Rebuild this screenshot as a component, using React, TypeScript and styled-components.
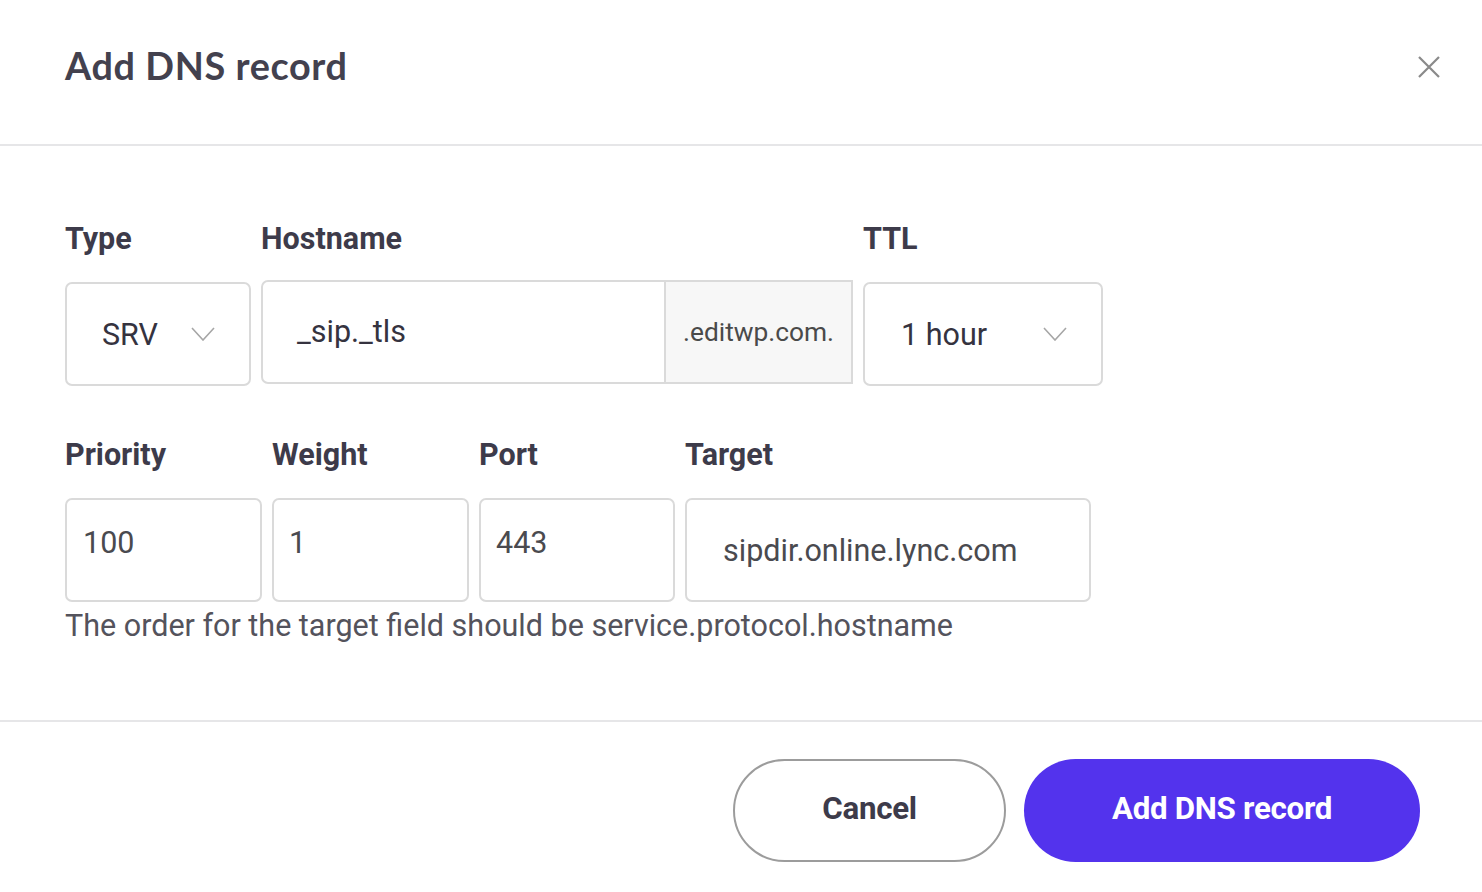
import React from "react";
import styled, { createGlobalStyle } from "styled-components";

const Global = createGlobalStyle`
  html, body { margin: 0; padding: 0; background: #fff; }
  body { font-family: Roboto, "Liberation Sans", sans-serif; }
  * { box-sizing: border-box; }
`;

const Modal = styled.div`
  width: 1482px;
  height: 892px;
  background: #fff;
  display: flex;
  flex-direction: column;
`;

const Header = styled.header`
  height: 146px;
  border-bottom: 2px solid #e6e6e8;
  display: flex;
  align-items: center;
  justify-content: space-between;
  padding: 0 38px 14px 65px;
`;

const Title = styled.h1`
  margin: 0;
  font-family: Lato, "Noto Sans", sans-serif;
  font-weight: 700;
  font-size: 37.8px;
  letter-spacing: 0.6px;
  color: #43414e;
`;

const CloseBtn = styled.button`
  border: none;
  background: none;
  padding: 0;
  margin-top: 4px;
  width: 30px;
  height: 30px;
  display: flex;
  align-items: center;
  justify-content: center;
  cursor: pointer;
`;

const Body = styled.div`
  flex: 1;
  padding: 72px 65px 0 65px;
  display: flex;
  flex-direction: column;
`;

const Row = styled.div<{ $mt?: number }>`
  display: flex;
  gap: 10px;
  margin-top: ${(p) => p.$mt ?? 0}px;
`;

const Field = styled.div<{ $w: number }>`
  width: ${(p) => p.$w}px;
  display: flex;
  flex-direction: column;
`;

const Label = styled.div`
  font-size: 30.5px;
  font-weight: 700;
  color: #3d3b4a;
  height: 42px;
  line-height: 42px;
  margin-bottom: 22px;
`;

const Box = styled.div<{ $pl?: number; $shift?: number; $muted?: boolean }>`
  height: 104px;
  border: 2px solid #dadada;
  border-radius: 7px;
  display: flex;
  align-items: center;
  padding-left: ${(p) => p.$pl ?? 22}px;
  padding-right: 34px;
  font-size: 30.5px;
  color: ${(p) => (p.$muted ? "#4a4a4f" : "#35333f")};
  background: #fff;
  justify-content: space-between;
  span {
    position: relative;
    top: ${(p) => p.$shift ?? 0}px;
  }
`;

const Group = styled.div`
  display: flex;
  height: 104px;
  margin-top: -2px;
  border: 2px solid #dadada;
  border-radius: 7px 0 0 7px;
  overflow: hidden;
`;

const GroupInput = styled.div`
  flex: 1;
  display: flex;
  align-items: center;
  padding-left: 34px;
  padding-bottom: 2px;
  font-size: 30.5px;
  color: #35333f;
  border-right: 2px solid #dadada;
`;

const Addon = styled.div`
  width: 185px;
  display: flex;
  align-items: center;
  justify-content: center;
  background-color: #f7f7f7;
  background-image: radial-gradient(#ececec 0.6px, transparent 0.6px);
  background-size: 4px 4px;
  font-size: 26.3px;
  color: #4a4a4a;
`;

const Help = styled.div`
  font-size: 30.5px;
  color: #54535c;
  margin-top: 4px;
  line-height: 40px;
`;

const Footer = styled.footer`
  height: 172px;
  border-top: 2px solid #e6e6e8;
  display: flex;
  justify-content: flex-end;
  align-items: flex-start;
  padding: 37px 62px 0 0;
  gap: 18px;
`;

const Button = styled.button<{ $primary?: boolean; $w: number }>`
  width: ${(p) => p.$w}px;
  height: 103px;
  border-radius: 52px;
  font-family: Roboto, "Liberation Sans", sans-serif;
  font-weight: 700;
  font-size: 31.3px;
  letter-spacing: -0.3px;
  padding: 0 0 4px 0;
  cursor: pointer;
  border: ${(p) => (p.$primary ? "none" : "2px solid #9c9c9c")};
  background: ${(p) => (p.$primary ? "#5333ed" : "#fff")};
  color: ${(p) => (p.$primary ? "#fff" : "#3d3b4a")};
`;

const Chevron = () => (
  <svg width="24" height="14" viewBox="0 0 24 14" fill="none">
    <polyline points="1,1 12,13 23,1" stroke="#a6a6a6" strokeWidth="1.6" />
  </svg>
);

export default function App() {
  return (
    <>
      <Global />
      <Modal>
        <Header>
          <Title>Add DNS record</Title>
          <CloseBtn aria-label="Close">
            <svg width="24" height="24" viewBox="0 0 24 24">
              <path d="M2 2 L22 22 M22 2 L2 22" stroke="#8a8a8a" strokeWidth="2.2" />
            </svg>
          </CloseBtn>
        </Header>
        <Body>
          <Row>
            <Field $w={186}>
              <Label>Type</Label>
              <Box $pl={35}>
                <span>SRV</span>
                <Chevron />
              </Box>
            </Field>
            <Field $w={592}>
              <Label>Hostname</Label>
              <Group>
                <GroupInput>_sip._tls</GroupInput>
                <Addon>.editwp.com.</Addon>
              </Group>
            </Field>
            <Field $w={240}>
              <Label>TTL</Label>
              <Box $pl={36}>
                <span>1 hour</span>
                <Chevron />
              </Box>
            </Field>
          </Row>
          <Row $mt={48}>
            <Field $w={197}>
              <Label>Priority</Label>
              <Box $muted $shift={-8} $pl={16}>
                <span>100</span>
              </Box>
            </Field>
            <Field $w={197}>
              <Label>Weight</Label>
              <Box $muted $shift={-8} $pl={15}>
                <span>1</span>
              </Box>
            </Field>
            <Field $w={196}>
              <Label>Port</Label>
              <Box $muted $shift={-8} $pl={15}>
                <span>443</span>
              </Box>
            </Field>
            <Field $w={406}>
              <Label>Target</Label>
              <Box $muted $pl={36}>
                <span>sipdir.online.lync.com</span>
              </Box>
            </Field>
          </Row>
          <Help>The order for the target field should be service.protocol.hostname</Help>
        </Body>
        <Footer>
          <Button $w={273}>Cancel</Button>
          <Button $w={396} $primary>
            Add DNS record
          </Button>
        </Footer>
      </Modal>
    </>
  );
}
